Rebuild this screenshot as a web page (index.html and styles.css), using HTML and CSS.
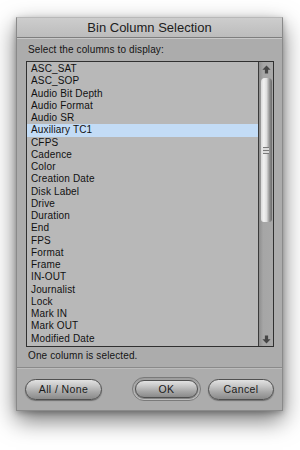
FILE: index.html
```html
<!DOCTYPE html>
<html>
<head>
<meta charset="utf-8">
<link rel="stylesheet" href="styles.css">
</head>
<body>
<div class="dialog">
  <div class="titlebar">Bin Column Selection</div>
  <div class="content">
    <div class="prompt">Select the columns to display:</div>
    <div class="listbox">
      <ul class="items">
        <li>ASC_SAT</li>
        <li>ASC_SOP</li>
        <li>Audio Bit Depth</li>
        <li>Audio Format</li>
        <li>Audio SR</li>
        <li class="selected">Auxiliary TC1</li>
        <li>CFPS</li>
        <li>Cadence</li>
        <li>Color</li>
        <li>Creation Date</li>
        <li>Disk Label</li>
        <li>Drive</li>
        <li>Duration</li>
        <li>End</li>
        <li>FPS</li>
        <li>Format</li>
        <li>Frame</li>
        <li>IN-OUT</li>
        <li>Journalist</li>
        <li>Lock</li>
        <li>Mark IN</li>
        <li>Mark OUT</li>
        <li>Modified Date</li>
      </ul>
      <div class="scrollbar">
        <div class="arrow up"><svg width="9" height="9" viewBox="0 0 9 9"><path d="M4.5 0.5 L8.6 4.8 L6.1 4.8 L6.1 8.6 L2.9 8.6 L2.9 4.8 L0.4 4.8 Z" fill="#464646"/></svg></div>
        <div class="thumb"><span class="grip"></span></div>
        <div class="arrow down"><svg width="9" height="9" viewBox="0 0 9 9"><path d="M4.5 8.5 L8.6 4.2 L6.1 4.2 L6.1 0.4 L2.9 0.4 L2.9 4.2 L0.4 4.2 Z" fill="#464646"/></svg></div>
      </div>
    </div>
    <div class="status">One column is selected.</div>
  </div>
  <div class="buttons">
    <button class="btn allnone">All / None</button>
    <span class="default-ring"><button class="btn ok">OK</button></span>
    <button class="btn cancel">Cancel</button>
  </div>
</div>
</body>
</html>
```

FILE: styles.css
```css
html, body {
  margin: 0;
  padding: 0;
  background: #ffffff;
}
body {
  width: 300px;
  height: 450px;
  padding: 17px 0 0 16px;
  box-sizing: border-box;
  font-family: "Liberation Sans", Arial, sans-serif;
  color: #141414;
}
.dialog {
  width: 267px;
  height: 394px;
  box-sizing: border-box;
  background: #acacac;
  border: 1px solid #8a8a8a;
  border-top-color: #b8b8b8;
  box-shadow: 0 9px 22px rgba(0, 0, 0, 0.55), 0 2px 6px rgba(0, 0, 0, 0.25);
  display: flex;
  flex-direction: column;
}
.titlebar {
  height: 19px;
  line-height: 19px;
  text-align: center;
  font-size: 13px;
  color: #202020;
  background: linear-gradient(#cdcdcd, #bcbcbc);
  border-bottom: 1px solid #7e7e7e;
  box-shadow: 0 1px 0 #c8c8c8;
}
.content {
  padding: 0 8px 0 9px;
}
.prompt {
  font-size: 10px;
  letter-spacing: 0.12px;
  height: 23px;
  line-height: 24px;
  padding-left: 2px;
}
.listbox {
  display: flex;
  height: 286px;
  box-sizing: border-box;
  border: 1px solid #303030;
  background: #b8b8b8;
}
.items {
  list-style: none;
  margin: 0;
  padding: 1px 0 0 0;
  flex: 1;
}
.items li {
  height: 12.25px;
  line-height: 12.25px;
  font-size: 10px;
  letter-spacing: 0.15px;
  padding-left: 4px;
  color: #111;
}
.items li.selected {
  background: #c3dcf6;
}
.scrollbar {
  width: 14px;
  border-left: 1px solid #3a3a3a;
  background: linear-gradient(to right, #8e8e8e, #a6a6a6 30%, #a8a8a8);
  display: flex;
  flex-direction: column;
  align-items: center;
}
.arrow {
  height: 14px;
  width: 14px;
  display: flex;
  align-items: center;
  justify-content: center;
}
.arrow.down {
  margin-top: auto;
}
.thumb {
  margin-top: 2px;
  width: 11px;
  height: 144px;
  border-radius: 4px 4px 3px 3px;
  background: linear-gradient(to right, #d8d8d8 0%, #f2f2f2 25%, #dedede 50%, #8c8c8c 80%, #6a6a6a 100%);
  display: flex;
  align-items: center;
  justify-content: center;
}
.grip {
  width: 6px;
  height: 5px;
  border-top: 1px solid #7a7a7a;
  border-bottom: 1px solid #7a7a7a;
  background: linear-gradient(#dcdcdc 0, #dcdcdc 2px, #7a7a7a 2px, #7a7a7a 3px, #dcdcdc 3px);
}
.status {
  font-size: 10px;
  letter-spacing: 0.12px;
  height: 20px;
  line-height: 17px;
  padding-left: 2px;
}
.buttons {
  border-top: 1px solid #8a8a8a;
  box-shadow: inset 0 1px 0 #bcbcbc;
  display: flex;
  align-items: center;
  padding: 0 8px 0 8px;
  height: 43px;
  box-sizing: border-box;
  gap: 7px;
}
.btn {
  font-family: "Liberation Sans", Arial, sans-serif;
  font-size: 10.5px;
  letter-spacing: 0.4px;
  color: #1a1a1a;
  height: 21px;
  padding: 0;
  border: 1px solid #505050;
  border-radius: 11px;
  background: linear-gradient(#e2e2e2 0%, #c8c8c8 30%, #a6a6a6 65%, #8a8a8a 100%);
  box-shadow: 0 1px 1px rgba(0, 0, 0, 0.35);
}
.allnone {
  width: 77px;
}
.default-ring {
  margin-left: auto;
  display: flex;
  align-items: center;
  justify-content: center;
  width: 69px;
  height: 24px;
  box-sizing: border-box;
  border-radius: 12px;
  border: 1px solid #7a7a7a;
  background: linear-gradient(#9c9c9c, #c4c4c4);
}
.ok {
  width: 63px;
  height: 18px;
  border-radius: 9px;
}
.cancel {
  width: 66px;
}
```
